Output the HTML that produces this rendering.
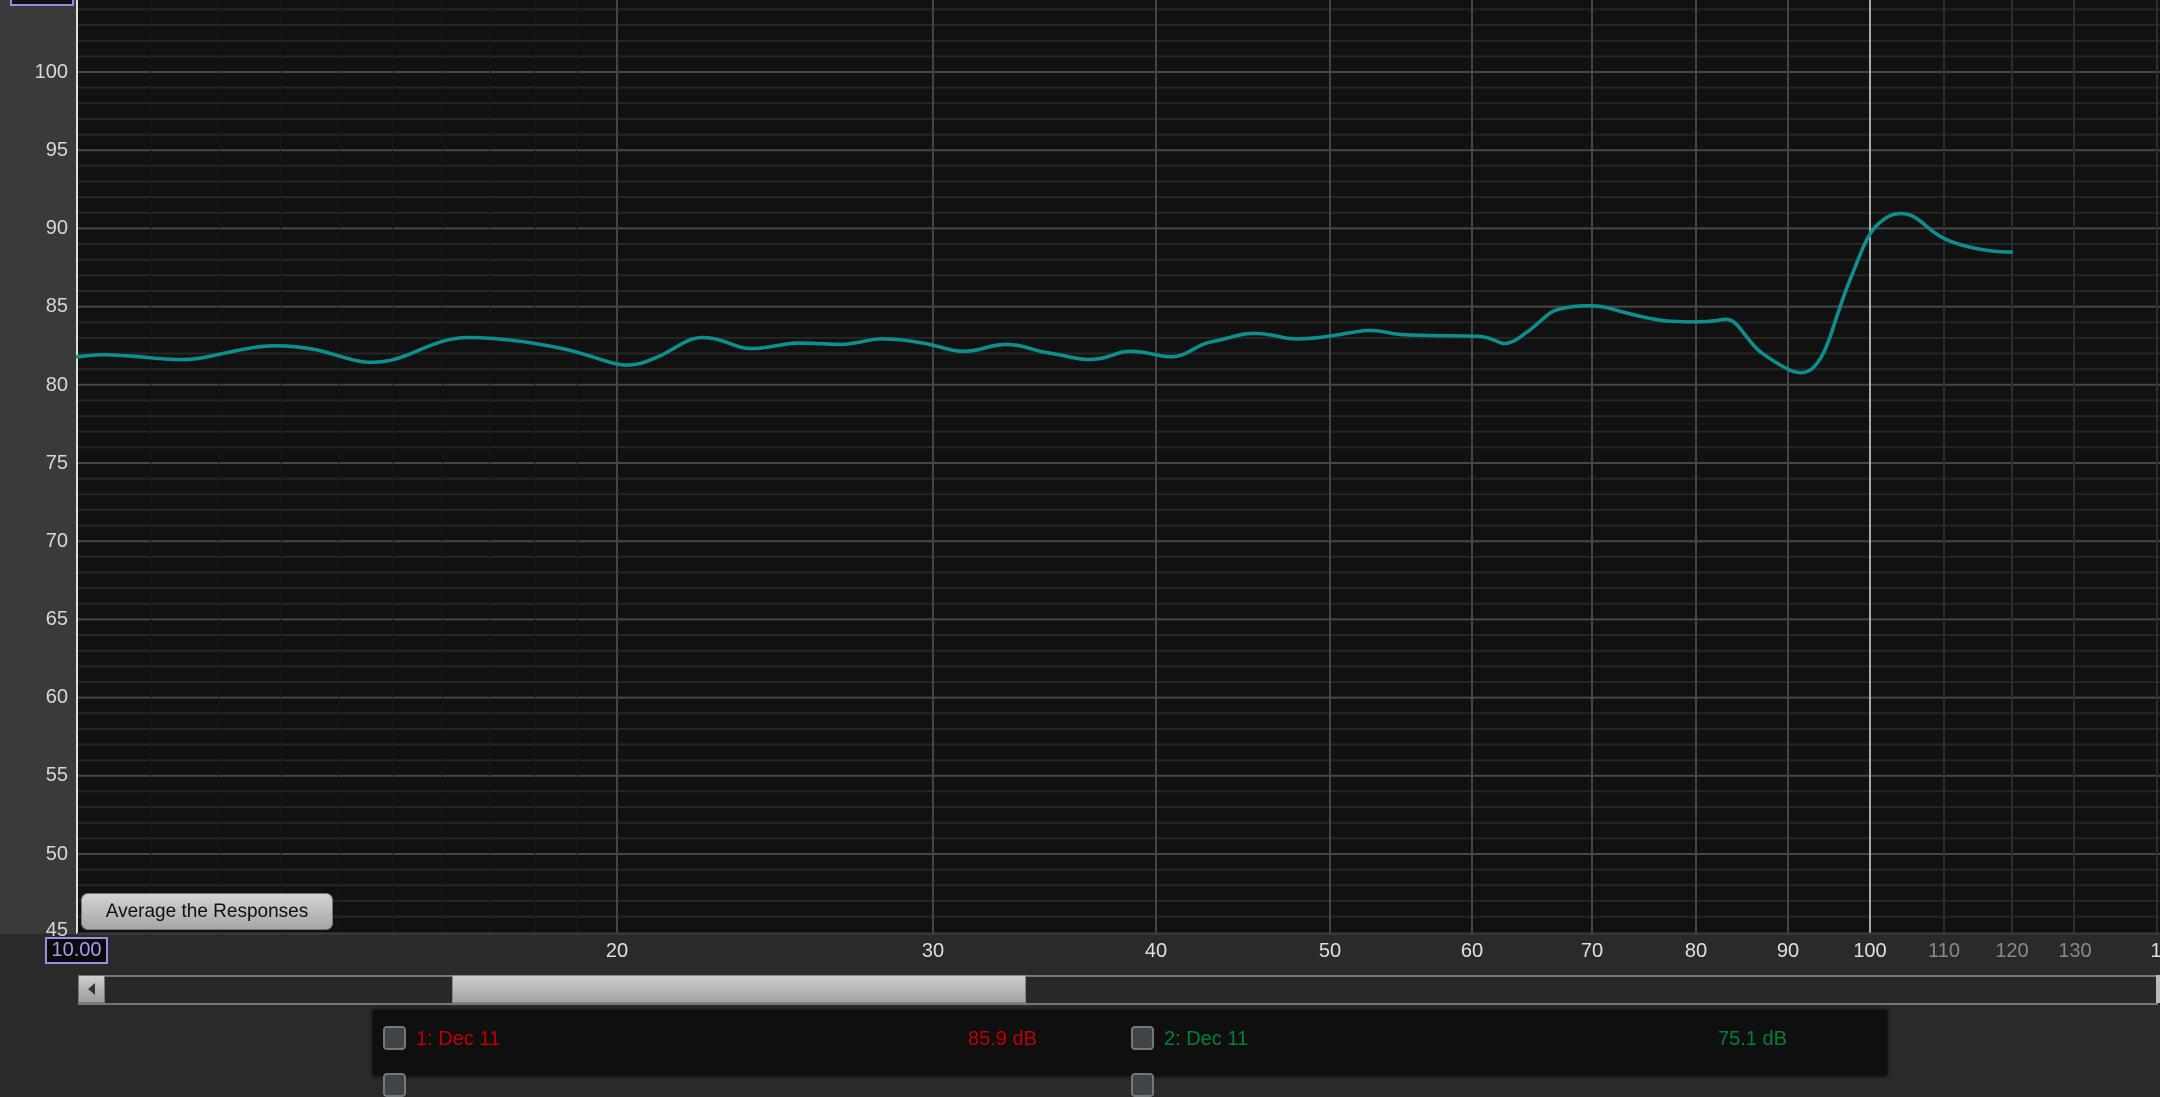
<!DOCTYPE html>
<html><head><meta charset="utf-8"><style>
html,body{margin:0;padding:0;width:2160px;height:1076px;overflow:hidden;background:#2a2a2a;font-family:"Liberation Sans","DejaVu Sans",sans-serif}
.abs{position:absolute}
.yl{position:absolute;right:2092px;color:#d8d8d8;font-size:20px;line-height:20px;text-align:right;width:60px}
.xl{position:absolute;top:940px;color:#e0e0e0;font-size:20px;line-height:22px;transform:translateX(-50%)}
.xl.d{color:#8a8a8a}
</style></head><body>
<div class="abs" style="left:0;top:0;width:77px;height:934px;background:#3a3a3a"></div>
<div class="abs" style="left:77px;top:0;width:2083px;height:934px;background:#111"></div>
<svg class="abs" style="left:0;top:0" width="2160" height="1076">
<g stroke="#262626" stroke-width="2">
<line x1="78" x2="2160" y1="9.4" y2="9.4"/><line x1="78" x2="2160" y1="25" y2="25"/><line x1="78" x2="2160" y1="40.7" y2="40.7"/><line x1="78" x2="2160" y1="56.4" y2="56.4"/>
</g>
<g id="m" stroke="#262626" stroke-width="2">
<line x1="78" x2="2160" y1="87.6" y2="87.6"/><line x1="78" x2="2160" y1="103.3" y2="103.3"/><line x1="78" x2="2160" y1="118.9" y2="118.9"/><line x1="78" x2="2160" y1="134.6" y2="134.6"/>
</g>
<use href="#m" y="78.2"/><use href="#m" y="156.4"/><use href="#m" y="234.6"/><use href="#m" y="312.8"/><use href="#m" y="391"/><use href="#m" y="469.2"/><use href="#m" y="547.4"/><use href="#m" y="625.6"/><use href="#m" y="703.8"/><use href="#m" y="782"/>
<g stroke="#474747" stroke-width="2">
<line x1="78" x2="2160" y1="72" y2="72"/><line x1="78" x2="2160" y1="150.2" y2="150.2"/><line x1="78" x2="2160" y1="228.4" y2="228.4"/><line x1="78" x2="2160" y1="306.6" y2="306.6"/><line x1="78" x2="2160" y1="384.8" y2="384.8"/><line x1="78" x2="2160" y1="463" y2="463"/><line x1="78" x2="2160" y1="541.2" y2="541.2"/><line x1="78" x2="2160" y1="619.4" y2="619.4"/><line x1="78" x2="2160" y1="697.6" y2="697.6"/><line x1="78" x2="2160" y1="775.8" y2="775.8"/><line x1="78" x2="2160" y1="854" y2="854"/>
</g>
<g stroke="#181818" stroke-width="1">
<line x1="151" x2="151" y1="0" y2="933"/><line x1="219" x2="219" y1="0" y2="933"/><line x1="281" x2="281" y1="0" y2="933"/><line x1="339" x2="339" y1="0" y2="933"/><line x1="393" x2="393" y1="0" y2="933"/><line x1="443" x2="443" y1="0" y2="933"/><line x1="490" x2="490" y1="0" y2="933"/><line x1="535" x2="535" y1="0" y2="933"/><line x1="577" x2="577" y1="0" y2="933"/>
</g>
<g stroke="#444" stroke-width="2">
<line x1="617" x2="617" y1="0" y2="933"/><line x1="933" x2="933" y1="0" y2="933"/><line x1="1156" x2="1156" y1="0" y2="933"/><line x1="1330" x2="1330" y1="0" y2="933"/><line x1="1472" x2="1472" y1="0" y2="933"/><line x1="1592" x2="1592" y1="0" y2="933"/><line x1="1696" x2="1696" y1="0" y2="933"/><line x1="1788" x2="1788" y1="0" y2="933"/>
</g>
<g stroke="#2c2c2c" stroke-width="2">
<line x1="1944" x2="1944" y1="0" y2="933"/><line x1="2012" x2="2012" y1="0" y2="933"/><line x1="2074" x2="2074" y1="0" y2="933"/><line x1="2157" x2="2157" y1="0" y2="933"/>
</g>
<line x1="1870" x2="1870" y1="0" y2="933" stroke="#aaa" stroke-width="2"/>
<line x1="77" x2="77" y1="0" y2="934" stroke="#ddd" stroke-width="2"/>
<line x1="77" x2="2160" y1="933.5" y2="933.5" stroke="#3c3c3c" stroke-width="2"/>
<g transform="scale(1.3776)">
<path fill="none" stroke="#0f8e8e" stroke-width="2.6" stroke-linecap="round" stroke-linejoin="round" d="M56,259 C65,258 70,257.5 75,257.5 C100,258 115,261 130,261 C145,261 150,259 160,257 C180,252.5 190,251 200,251 C212,251 220,252 230,254 C250,259 258,263 270,263 C282,263 290,260 300,256 C318,248 328,245 340,245 C355,245 368,246.5 380,248 C398,251 410,253 420,256 C438,261 445,265 455,265 C466,265 472,261 480,258 C495,250 500,245 510,245 C525,245 533,253 545,253 C560,253 567,249 580,249 C595,249 600,250 610,250 C622,250 630,246 640,246 C652,246 660,247.5 670,249 C685,252 690,255 700,255 C712,255 718,250 730,250 C743,250 748,254 760,256 C775,258 780,261 790,261 C805,261 810,255 820,255 C835,255 840,259 850,259 C862,259 868,250 880,248 C895,245 900,242 910,242 C925,242 930,246 940,246 C960,246 975,242 990,240 C1003,239 1010,243 1020,243 C1040,244 1055,243.5 1070,244 C1085,244 1088,251 1095,249 C1102,247 1105,243 1110,240 C1120,232 1125,226 1130,225 C1140,222 1148,222 1155,222 C1165,222 1172,225 1180,227 C1192,230 1200,232 1210,233 C1228,234 1240,234 1250,232 C1257,231 1259,234 1262,237 C1270,247 1274,253 1280,257 C1290,264 1294,266 1300,269 C1308,272 1312,270 1315,268 C1322,262 1326,252 1330,240 C1338,215 1342,205 1345,198 C1352,180 1356,170 1362,164 C1370,156 1375,155 1380,155 C1388,155 1392,159 1397,163 C1405,170 1410,173 1418,176 C1430,180 1445,183 1460,183"/>
</g>
</svg>
<div class="yl" style="top:62px">100</div>
<div class="yl" style="top:140px">95</div>
<div class="yl" style="top:218px">90</div>
<div class="yl" style="top:296px">85</div>
<div class="yl" style="top:375px">80</div>
<div class="yl" style="top:453px">75</div>
<div class="yl" style="top:531px">70</div>
<div class="yl" style="top:609px">65</div>
<div class="yl" style="top:687px">60</div>
<div class="yl" style="top:765px">55</div>
<div class="yl" style="top:844px">50</div>
<div class="yl" style="top:920px">45</div>
<div class="abs" style="left:10px;top:-20px;width:60px;height:22px;border:2px solid #958ee6;background:#111;color:#958ee6;font-size:19px;line-height:22px;text-align:center">100.0</div>
<div class="abs" style="left:81px;top:893px;width:250px;height:35px;border:1px solid #777;border-radius:7px;background:linear-gradient(#d4d4d4,#a6a6a6);color:#111;font-size:19px;line-height:35px;text-align:center">Average the Responses</div>
<div class="abs" style="left:45px;top:937px;width:59px;height:23px;border:2px solid #958ee6;background:#0b0b0b;color:#a29cf0;font-size:20px;line-height:23px;text-align:center">10.00</div>
<div class="xl" style="left:617px">20</div>
<div class="xl" style="left:933px">30</div>
<div class="xl" style="left:1156px">40</div>
<div class="xl" style="left:1330px">50</div>
<div class="xl" style="left:1472px">60</div>
<div class="xl" style="left:1592px">70</div>
<div class="xl" style="left:1696px">80</div>
<div class="xl" style="left:1788px">90</div>
<div class="xl" style="left:1870px">100</div>
<div class="xl d" style="left:1944px">110</div>
<div class="xl d" style="left:2012px">120</div>
<div class="xl d" style="left:2075px">130</div>
<div class="xl" style="left:2156px">1</div>
<div class="abs" style="left:78px;top:975px;width:2080px;height:26px;border-top:2px solid #777;border-bottom:2px solid #777;background:#282828"></div>
<div class="abs" style="left:78px;top:975px;width:27px;height:28px;background:linear-gradient(#cfcfcf,#9c9c9c);border:1px solid #777;box-sizing:border-box"></div>
<div class="abs" style="left:88px;top:983px;width:0;height:0;border-top:6px solid transparent;border-bottom:6px solid transparent;border-right:7px solid #333"></div>
<div class="abs" style="left:452px;top:975px;width:574px;height:28px;background:linear-gradient(#cdcdcd,#a3a3a3);border:1px solid #888;box-sizing:border-box"></div>
<div class="abs" style="left:2156px;top:975px;width:4px;height:28px;background:#bbb"></div>
<div class="abs" style="left:373px;top:1010px;width:1514px;height:66px;background:#0f0f0f;box-shadow:0 0 4px #000"></div>
<div class="abs" style="left:383px;top:1026px;width:23px;height:24px;border:2px solid #777;border-radius:4px;background:#3e4447;box-sizing:border-box"></div>
<div class="abs" style="left:416px;top:1027px;color:#c00000;font-size:20px;line-height:24px">1: Dec 11</div>
<div class="abs" style="left:968px;top:1027px;color:#c00000;font-size:20px;line-height:24px">85.9 dB</div>
<div class="abs" style="left:1131px;top:1026px;width:23px;height:24px;border:2px solid #777;border-radius:4px;background:#3e4447;box-sizing:border-box"></div>
<div class="abs" style="left:1164px;top:1027px;color:#00803a;font-size:20px;line-height:24px">2: Dec 11</div>
<div class="abs" style="left:1718px;top:1027px;color:#00803a;font-size:20px;line-height:24px">75.1 dB</div>
<div class="abs" style="left:383px;top:1073px;width:23px;height:24px;border:2px solid #777;border-radius:4px;background:#3e4447;box-sizing:border-box"></div>
<div class="abs" style="left:1131px;top:1073px;width:23px;height:24px;border:2px solid #777;border-radius:4px;background:#3e4447;box-sizing:border-box"></div>
</body></html>
